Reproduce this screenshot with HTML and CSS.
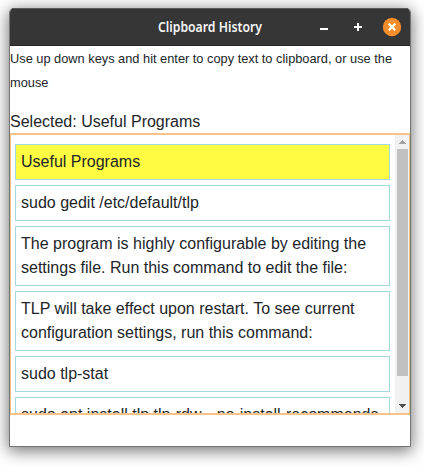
FILE: index.html
```html
<!DOCTYPE html>
<html lang="en">
<head>
<meta charset="utf-8">
<title>Clipboard History</title>
<link rel="stylesheet" href="styles.css">
</head>
<body>
<div class="window">
  <header class="titlebar">
    <h1 class="title">Clipboard History</h1>
    <div class="controls">
      <svg width="20" height="20" viewBox="0 0 20 20"><path d="M6 12h8" stroke="#fff" stroke-width="2"/></svg>
      <svg width="20" height="20" viewBox="0 0 20 20"><path d="M6 10h8M10 6v8" stroke="#fff" stroke-width="2"/></svg>
      <svg width="20" height="20" viewBox="0 0 20 20"><circle cx="10" cy="10" r="9.2" fill="#f58d2a"/><path d="M6.8 6.8l6.4 6.4M13.2 6.8l-6.4 6.4" stroke="#fff" stroke-width="2.3"/></svg>
    </div>
  </header>
  <main class="content">
    <p class="help">Use up down keys and hit enter to copy text to clipboard, or use the mouse</p>
    <div class="selected">Selected: Useful Programs</div>
    <div class="history">
      <div class="items">
        <div class="item active">Useful Programs</div>
        <div class="item">sudo gedit /etc/default/tlp</div>
        <div class="item">The program is highly configurable by editing the settings file. Run this command to edit the file:</div>
        <div class="item">TLP will take effect upon restart. To see current configuration settings, run this command:</div>
        <div class="item">sudo tlp-stat</div>
        <div class="item">sudo apt install tlp tlp-rdw --no-install-recommends</div>
      </div>
      <div class="scrollbar">
        <svg class="arrow" width="15" height="15" viewBox="0 0 15 15" shape-rendering="crispEdges"><path d="M4 10L7.5 6L11 10z" fill="#a3a3a3"/></svg>
        <div class="thumb"></div>
        <svg class="arrow" width="15" height="15" viewBox="0 0 15 15" shape-rendering="crispEdges"><path d="M4 5L7.5 9L11 5z" fill="#505050"/></svg>
      </div>
    </div>
  </main>
</div>
</body>
</html>
```
FILE: styles.css
```css
* {
  box-sizing: border-box;
}

body {
  margin: 0;
  height: 467px;
  padding: 8px 13px 0 9px;
  overflow: hidden;
  background: #fff;
  color: #212529;
  font: 16px/24px "Liberation Sans", Arial, sans-serif;
}

.window {
  height: 439px;
  border: 1px solid #747474;
  border-top: 0;
  border-radius: 5px 5px 0 0;
  overflow: hidden;
  background: #fff;
  box-shadow: 0 3px 16px 1px rgba(0, 0, 0, .55);
}

.titlebar {
  display: grid;
  grid-template-columns: 1fr auto 1fr;
  align-items: center;
  height: 38px;
  border-top: 1px solid #5b5b5b;
  border-bottom: 1px solid #242424;
  background: #363636;
}

.title {
  grid-column: 2;
  width: 106px;
  margin: 0;
  display: flex;
  justify-content: center;
  color: #f5f5f5;
  font: 600 14px/20px "Noto Sans", sans-serif;
  white-space: nowrap;
  transform: scaleX(.875);
}

.controls {
  display: flex;
  justify-content: flex-end;
  gap: 14px;
  padding-right: 8px;
}

.help {
  margin: 0 0 15px;
  padding-top: 1px;
  font-size: 12.8px;
}

.selected {
  height: 24px;
}

.history {
  display: flex;
  height: 280px;
  overflow: hidden;
  outline: 2px solid #f8c486;
  outline-offset: -1px;
}

.items {
  flex: 1;
  min-width: 0;
  padding: 10px 5px 0;
}

.item {
  margin-bottom: 5px;
  padding: 5px;
  border: 1px solid #a5d9e2;
}

.active {
  background: #fffb42;
}

.scrollbar {
  display: flex;
  flex-direction: column;
  width: 15px;
  background: #f1f1f1;
}

.arrow {
  display: block;
}

.thumb {
  height: 227px;
  margin: 0 2px auto;
  background: #c1c1c1;
}
```
